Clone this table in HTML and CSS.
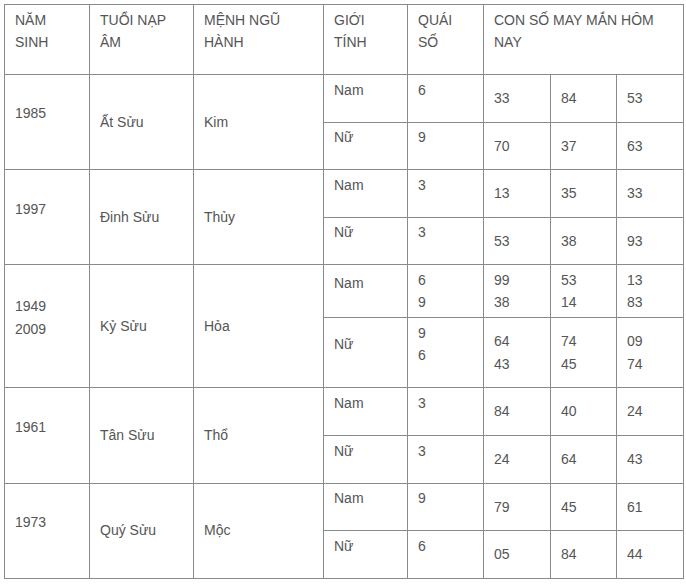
FILE: index.html
```html
<!DOCTYPE html>
<html lang="vi">
<head>
<meta charset="utf-8">
<title>Con số may mắn</title>
<link rel="stylesheet" href="styles.css">
</head>
<body>
<table class="lucky">
  <colgroup>
    <col class="c-year">
    <col class="c-tuoi">
    <col class="c-menh">
    <col class="c-gioi">
    <col class="c-quai">
    <col class="c-num1">
    <col class="c-num2">
    <col class="c-num3">
  </colgroup>
  <thead>
    <tr>
      <th class="lift">NĂM<br>SINH</th>
      <th class="lift">TUỔI NẠP<br>ÂM</th>
      <th class="lift">MỆNH NGŨ<br>HÀNH</th>
      <th class="lift">GIỚI<br>TÍNH</th>
      <th class="lift">QUÁI<br>SỐ</th>
      <th class="lift" colspan="3">CON SỐ MAY MẮN HÔM<br>NAY</th>
    </tr>
  </thead>
  <tbody>
    <tr>
      <td class="lift" rowspan="2">1985</td>
      <td rowspan="2">Ất Sửu</td>
      <td rowspan="2">Kim</td>
      <td class="lift">Nam</td>
      <td class="lift">6</td>
      <td>33</td><td>84</td><td>53</td>
    </tr>
    <tr>
      <td class="lift">Nữ</td>
      <td class="lift">9</td>
      <td>70</td><td>37</td><td>63</td>
    </tr>
    <tr>
      <td class="lift" rowspan="2">1997</td>
      <td rowspan="2">Đinh Sửu</td>
      <td rowspan="2">Thủy</td>
      <td class="lift">Nam</td>
      <td class="lift">3</td>
      <td>13</td><td>35</td><td>33</td>
    </tr>
    <tr>
      <td class="lift">Nữ</td>
      <td class="lift">3</td>
      <td>53</td><td>38</td><td>93</td>
    </tr>
    <tr>
      <td class="lift" rowspan="2">1949<br>2009</td>
      <td rowspan="2">Kỷ Sửu</td>
      <td rowspan="2">Hỏa</td>
      <td class="lift">Nam</td>
      <td>6<br>9</td>
      <td>99<br>38</td><td>53<br>14</td><td>13<br>83</td>
    </tr>
    <tr>
      <td class="lift">Nữ</td>
      <td class="lift">9<br>6</td>
      <td>64<br>43</td><td>74<br>45</td><td>09<br>74</td>
    </tr>
    <tr>
      <td class="lift" rowspan="2">1961</td>
      <td rowspan="2">Tân Sửu</td>
      <td rowspan="2">Thổ</td>
      <td class="lift">Nam</td>
      <td class="lift">3</td>
      <td>84</td><td>40</td><td>24</td>
    </tr>
    <tr>
      <td class="lift">Nữ</td>
      <td class="lift">3</td>
      <td>24</td><td>64</td><td>43</td>
    </tr>
    <tr>
      <td class="lift" rowspan="2">1973</td>
      <td rowspan="2">Quý Sửu</td>
      <td rowspan="2">Mộc</td>
      <td class="lift">Nam</td>
      <td class="lift">9</td>
      <td>79</td><td>45</td><td>61</td>
    </tr>
    <tr>
      <td class="lift">Nữ</td>
      <td class="lift">6</td>
      <td>05</td><td>84</td><td>44</td>
    </tr>
  </tbody>
</table>
</body>
</html>
```

FILE: styles.css
```css
html, body {
  margin: 0;
  padding: 0;
  background: #ffffff;
}

body {
  padding: 4px 0 0 4px;
  font-family: "Liberation Sans", Arial, sans-serif;
  font-size: 14px;
  line-height: 22.4px;
  color: #555555;
}

.lucky {
  border-collapse: collapse;
  table-layout: fixed;
  width: 680px;
}

.c-year { width: 85px; }
.c-tuoi { width: 104px; }
.c-menh { width: 130px; }
.c-gioi { width: 84px; }
.c-quai { width: 76px; }
.c-num1 { width: 67px; }
.c-num2 { width: 66px; }
.c-num3 { width: 67px; }

.lucky th,
.lucky td {
  border: 1px solid #8a8a8a;
  padding: 3.6px 10px;
  text-align: left;
  vertical-align: middle;
  font-weight: normal;
}

.lucky .lift {
  padding-bottom: 20.6px;
}
```
